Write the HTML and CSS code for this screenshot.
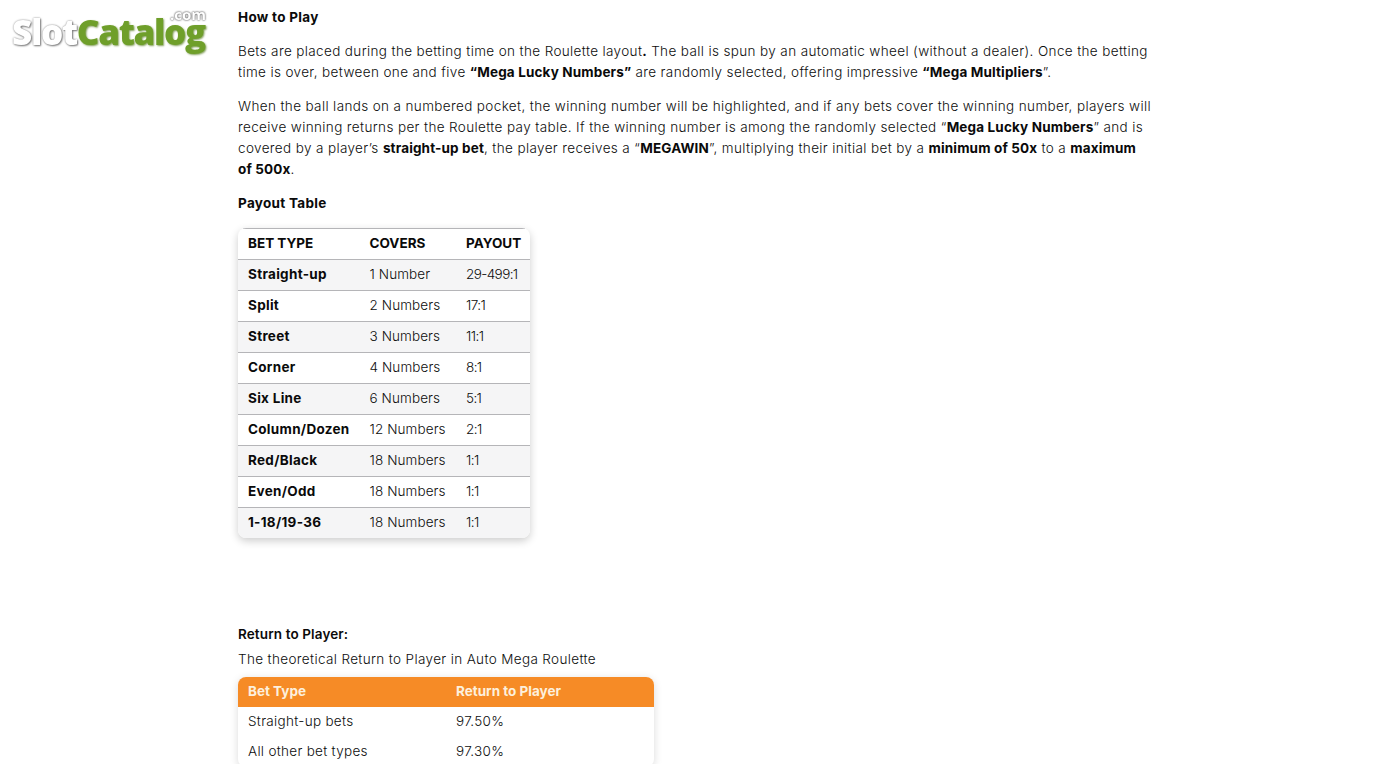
FILE: index.html
```html
<!DOCTYPE html>
<html lang="en">
<head>
<meta charset="utf-8">
<title>Auto Mega Roulette</title>
<link rel="stylesheet" href="styles.css">
</head>
<body>
<div class="page">
  <aside class="side">
    <div class="logo"><span class="com">.com</span><span class="slot">Slot</span><span class="catalog">Catalog</span></div>
  </aside>
  <main class="main">
    <p class="head first"><b>How to Play</b></p>
    <p class="para">Bets are placed during the betting time on the Roulette layout<b>.</b> The ball is spun by an automatic wheel (without a dealer). Once the betting<br>time is over, between one and five <b>“Mega Lucky Numbers”</b> are randomly selected, offering impressive <b>“Mega Multipliers</b>”.</p>
    <p class="para">When the ball lands on a numbered pocket, the winning number will be highlighted, and if any bets cover the winning number, players will<br>receive winning returns per the Roulette pay table. If the winning number is among the randomly selected “<b>Mega Lucky Numbers</b>” and is<br>covered by a player’s <b>straight-up bet</b>, the player receives a “<b>MEGAWIN</b>”, multiplying their initial bet by a <b>minimum of 50x</b> to a <b>maximum<br>of 500x</b>.</p>
    <p class="head"><b>Payout Table</b></p>
    <table class="pay">
      <thead><tr><th>BET TYPE</th><th>COVERS</th><th>PAYOUT</th></tr></thead>
      <tbody>
        <tr><td><b>Straight-up</b></td><td>1 Number</td><td class="ratio">29-499:1</td></tr>
        <tr><td><b>Split</b></td><td>2 Numbers</td><td class="ratio">17:1</td></tr>
        <tr><td><b>Street</b></td><td>3 Numbers</td><td class="ratio">11:1</td></tr>
        <tr><td><b>Corner</b></td><td>4 Numbers</td><td class="ratio">8:1</td></tr>
        <tr><td><b>Six Line</b></td><td>6 Numbers</td><td class="ratio">5:1</td></tr>
        <tr><td><b>Column/Dozen</b></td><td>12 Numbers</td><td class="ratio">2:1</td></tr>
        <tr><td><b>Red/Black</b></td><td>18 Numbers</td><td class="ratio">1:1</td></tr>
        <tr><td><b>Even/Odd</b></td><td>18 Numbers</td><td class="ratio">1:1</td></tr>
        <tr><td><b>1-18/19-36</b></td><td>18 Numbers</td><td class="ratio">1:1</td></tr>
      </tbody>
    </table>
    <p class="rtp-title">Return to Player:</p>
    <p class="rtp-sub">The theoretical Return to Player in Auto Mega Roulette</p>
    <table class="rtp">
      <thead><tr><th>Bet Type</th><th>Return to Player</th></tr></thead>
      <tbody>
        <tr><td>Straight-up bets</td><td>97.50%</td></tr>
        <tr><td>All other bet types</td><td>97.30%</td></tr>
      </tbody>
    </table>
  </main>
</div>
</body>
</html>
```
FILE: styles.css
```css
html, body { margin: 0; padding: 0; height: 764px; overflow: hidden; background: #fff; }
body { font-family: "Inter", "Liberation Sans", sans-serif; font-size: 13.5px; line-height: 21px; font-weight: 300; color: #0d0d0d; }
b { font-weight: 700; color: #0a0a0a; letter-spacing: 0.05px; }
.page { display: flex; align-items: flex-start; }
.side { width: 238px; flex: none; }
.logo { position: relative; width: 198px; margin: 11px 0 0 12px; height: 42px; font-family: "Open Sans", sans-serif; font-weight: 800; font-size: 35px; line-height: 42px; letter-spacing: -1.3px; white-space: nowrap; filter: blur(.4px); }
.slot { color: #fff; text-shadow: 0 0 2px #888, 1px 1px 2px #777; }
.catalog { color: #6f9f2a; text-shadow: 1px 1px 2px #84a05a; }
.com { position: absolute; left: 158px; top: -6px; font-size: 15px; line-height: 18px; font-weight: 700; letter-spacing: 0; color: #fff; text-shadow: 0 0 2px #666, 0 0 2px #666; }
.main { width: 915px; flex: none; }
p { margin: 0; }
.first { margin-top: 7px; }
.first b, .head b { letter-spacing: 0.3px; }
.para { margin-top: 13px; letter-spacing: 0.37px; white-space: nowrap; }
.para b { letter-spacing: 0.15px; }
.head:not(.first) { margin-top: 13px; }
.pay { margin-top: 14px; width: 292px; border-collapse: separate; border-spacing: 0; border-radius: 8px; box-shadow: 0 3px 8px rgba(0,0,0,.2); table-layout: fixed; }
.pay th, .pay td { padding: 0 0 2px 10px; box-sizing: border-box; height: 31px; text-align: left; border-bottom: 1px solid #b5b5b8; font-size: 13.5px; white-space: nowrap; }
.pay td { letter-spacing: 0.1px; }
.pay td b { letter-spacing: 0.3px; }
.pay td.ratio { letter-spacing: -0.6px; }
.pay th { padding-top: 1px; height: 32px; font-weight: 700; color: #0a0a0a; background: linear-gradient(#b5b5b8, #b5b5b8) no-repeat 0 0 / 100% 1px; }
.pay th:first-child { width: 121.5px; background-position: 5px 0; border-top-left-radius: 8px; }
.pay th:nth-child(2) { width: 96.5px; }
.pay th:last-child { background-position: -5px 0; border-top-right-radius: 8px; }
.pay tbody tr:nth-child(odd) td { background: #f5f5f6; }
.pay tbody tr:last-child td { border-bottom: 0; height: 30px; }
.pay tbody tr:last-child td:first-child { border-bottom-left-radius: 8px; }
.pay tbody tr:last-child td:last-child { border-bottom-right-radius: 8px; }
.rtp-title { margin-top: 86px; font-weight: 600; color: #0a0a0a; letter-spacing: 0.12px; }
.rtp-sub { margin-top: 4px; letter-spacing: 0.36px; }
.rtp { margin-top: 7px; width: 416px; border-collapse: separate; border-spacing: 0; border-radius: 8px; box-shadow: 0 2px 8px rgba(0,0,0,.15); table-layout: fixed; }
.rtp th, .rtp td { box-sizing: border-box; height: 30px; padding: 0 0 2px 10px; text-align: left; letter-spacing: 0.3px; }
.rtp th { background: #f68b26; color: #fdf0dd; font-weight: 700; letter-spacing: 0; }
.rtp th:first-child { border-top-left-radius: 8px; width: 208px; }
.rtp th:last-child { border-top-right-radius: 8px; }
```
